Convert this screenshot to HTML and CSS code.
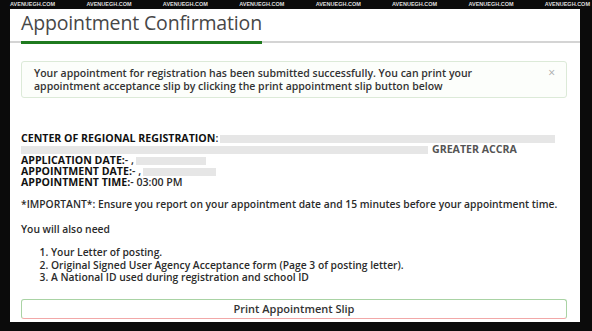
FILE: index.html
```html
<!DOCTYPE html>
<html>
<head>
  <title>Appointment Confirmation</title>
  <link rel="stylesheet" href="styles.css">
</head>
<body>
  <div class="topbar">
    <span>AVENUEGH.COM</span>
    <span>AVENUEGH.COM</span>
    <span>AVENUEGH.COM</span>
    <span>AVENUEGH.COM</span>
    <span>AVENUEGH.COM</span>
    <span>AVENUEGH.COM</span>
    <span>AVENUEGH.COM</span>
    <span>AVENUEGH.COM</span>
  </div>
  <div class="page">
    <div class="header">
      <h1>Appointment Confirmation</h1>
    </div>
    <div class="rule"><div class="rule-green"></div></div>

    <div class="content">
      <div class="alert">
        <span class="close">&times;</span>
        Your appointment for registration has been submitted successfully. You can print your
        appointment acceptance slip by clicking the print appointment slip button below
      </div>

      <div class="details">
        <div class="row">
          <b>CENTER OF REGIONAL REGISTRATION</b>:
          <span class="blank blank-long"></span>
        </div>
        <div class="row">
          <span class="blank blank-line"></span>
          <span class="region">GREATER ACCRA</span>
        </div>
        <div class="row"><b>APPLICATION DATE:</b>- ,<span class="blank blank-date"></span></div>
        <div class="row"><b>APPOINTMENT DATE:</b>- ,<span class="blank blank-date2"></span></div>
        <div class="row"><b>APPOINTMENT TIME:</b>- 03:00 PM</div>
      </div>

      <p class="important">*IMPORTANT*: Ensure you report on your appointment date and 15 minutes before your appointment time.</p>

      <p class="need">You will also need</p>
      <ol class="needs">
        <li>Your Letter of posting.</li>
        <li>Original Signed User Agency Acceptance form (Page 3 of posting letter).</li>
        <li>A National ID used during registration and school ID</li>
      </ol>

      <button class="print">Print Appointment Slip</button>
    </div>
  </div>
</body>
</html>
```

FILE: styles.css
```css
body {
  margin: 0;
  background-color: #0b0b0b;
  font-family: "Open Sans", Arial, sans-serif;
  color: #2b2b2b;
  overflow: hidden;
}

.topbar {
  height: 9px;
  display: flex;
  justify-content: space-between;
  padding: 0 2px 0 10px;
  font-family: "Liberation Sans", Arial, sans-serif;
  font-size: 5.5px;
  font-weight: bold;
  line-height: 9px;
  color: #ddd;
}

.page {
  margin-left: 10px;
  width: 570px;
  height: 313px;
  background-color: #fff;
}

.header {
  padding: 0 11px;
  height: 33px;
}

.header h1 {
  margin: 0;
  font-size: 19.5px;
  font-weight: 400;
  line-height: 27px;
  color: #474747;
  letter-spacing: -0.15px;
}

.rule {
  height: 2px;
  background-color: #d4d4d4;
}

.rule-green {
  margin-left: 11px;
  width: 241px;
  height: 3px;
  margin-top: -1px;
  background-color: #1f7a1f;
}

.content {
  padding: 18px 13px 0 11px;
  font-size: 10.3px;
  font-weight: 600;
}

.alert {
  position: relative;
  border: 1px solid #dcead8;
  border-radius: 3px;
  background-color: #fcfefb;
  padding: 5px 82px 4px 12px;
  font-size: 10.5px;
  line-height: 13px;
  color: #333;
}

.close {
  position: absolute;
  right: 11px;
  top: 4px;
  font-size: 12px;
  font-weight: 400;
  color: #aaa;
}

.details {
  margin-top: 35px;
  font-size: 10.6px;
  line-height: 11px;
}

.details b {
  font-weight: 700;
  color: #111;
}

.row {
  display: flex;
  align-items: center;
  height: 11px;
}

.blank {
  display: inline-block;
  height: 8px;
  background-color: #e6e6e6;
}

.blank-long {
  margin-left: 2px;
  width: 335px;
}

.blank-line {
  width: 407px;
}

.region {
  margin-left: 4px;
  color: #555;
  font-weight: 700;
}

.blank-date {
  margin-left: 2px;
  width: 70px;
}

.blank-date2 {
  margin-left: 2px;
  width: 73px;
}

.important {
  margin: 10px 0 0;
  line-height: 12px;
  white-space: nowrap;
}

.need {
  margin: 13px 0 0;
  line-height: 12px;
}

.needs {
  margin: 11px 0 0;
  padding-left: 30px;
  line-height: 12.5px;
}

.print {
  display: block;
  width: 100%;
  margin-top: 15px;
  height: 20px;
  background-color: #fff;
  border: 1px solid #a9d3a4;
  border-bottom-color: #f2a8a8;
  border-radius: 3px;
  font-family: "Open Sans", Arial, sans-serif;
  font-size: 11px;
  font-weight: 600;
  color: #333;
}
```
